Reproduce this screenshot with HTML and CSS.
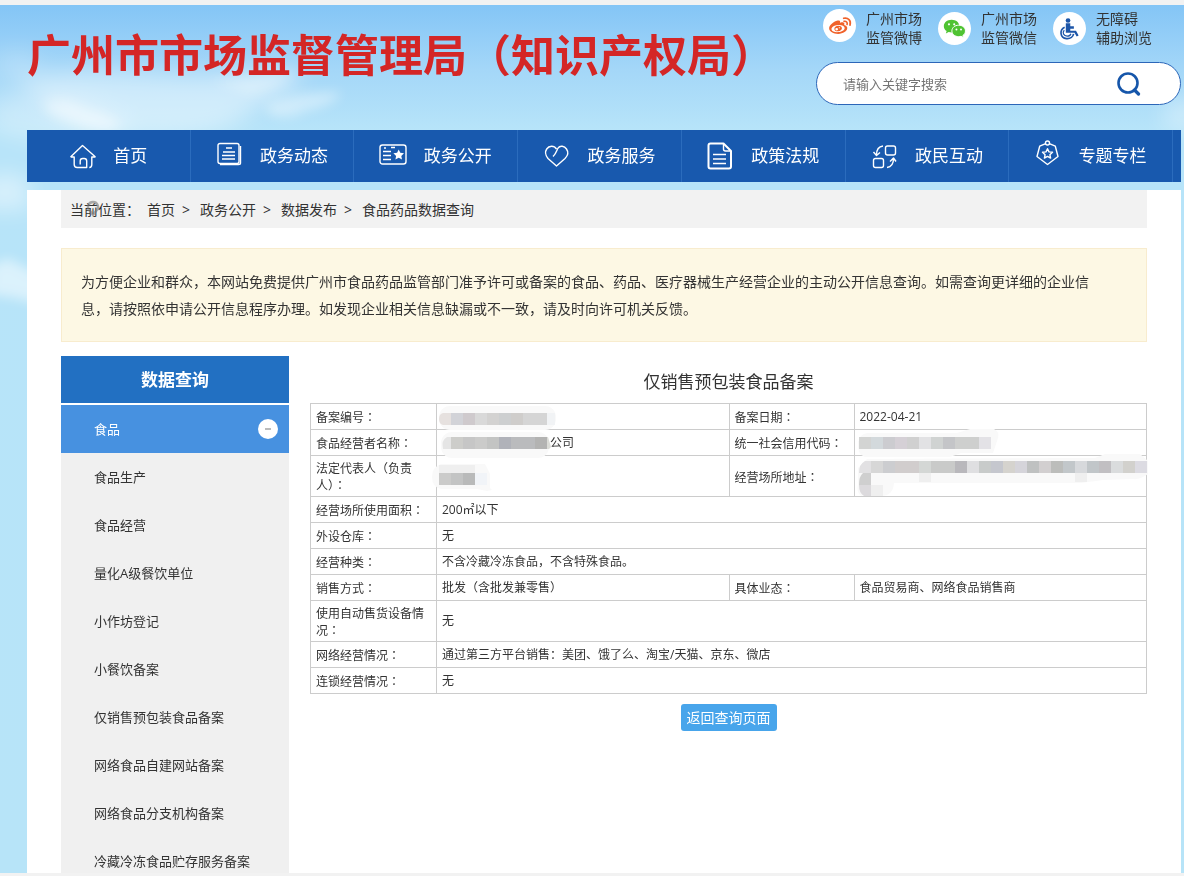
FILE: index.html
```html
<!DOCTYPE html>
<html lang="zh-CN">
<head>
<meta charset="utf-8">
<meta name="viewport" content="width=device-width, initial-scale=1">
<title>仅销售预包装食品备案</title>
<link rel="stylesheet" href="styles.css">
</head>
<body>
<div class="shell">
  <svg class="sky" viewBox="0 0 1184 400" width="1184" height="400" aria-hidden="true">
    <defs>
      <filter id="soft" x="-30%" y="-60%" width="160%" height="220%"><feGaussianBlur stdDeviation="11"/></filter>
      <filter id="fine" x="-30%" y="-60%" width="160%" height="220%"><feGaussianBlur stdDeviation="6"/></filter>
    </defs>
    <g fill="#fff" filter="url(#soft)">
      <path opacity=".42" d="M15 74 C70 60 120 68 180 70 S280 58 298 70 S260 95 240 115 S100 140 60 110Z"/>
      <path opacity=".3" d="M-10 95 C30 80 90 90 125 115 S60 150 -10 125Z"/>
      <path opacity=".45" d="M-20 175 Q15 160 30 178 V205 H-20Z"/>
      <path opacity=".2" d="M-5 50 Q25 40 45 55 L20 75 L-5 65Z"/>
      <path opacity=".35" d="M1165 100 Q1185 90 1200 95 V125 H1165Z"/>
    </g>
    <g fill="#fff" filter="url(#fine)">
      <path opacity=".4" d="M42 98 Q68 90 84 104 Q105 108 122 120 L108 126 Q80 122 66 116 Q48 112 42 98Z"/>
      <path opacity=".4" d="M266 100 Q305 84 342 88 Q334 100 305 106 Q290 116 270 110Z"/>
      <path opacity=".5" d="M-10 263 Q8 248 16 258 Q30 264 40 270 V300 Q10 290 -10 290Z"/>
      <path opacity=".25" d="M210 76 Q260 70 296 66 Q280 84 250 90Z"/>
    </g>
  </svg>

  <div class="page">
    <header class="header">
      <h1 class="site-title">广州市市场监督管理局（知识产权局）</h1>
      <div class="tools">
        <nav class="quick" aria-label="快捷入口">
          <a class="quick-link quick-link-raised" href="#">
            <svg class="quick-icon" viewBox="0 0 34 34" aria-hidden="true">
              <circle cx="17" cy="17" r="17" fill="#fff"/>
              <path fill="#f0622a" fill-rule="evenodd" d="M14.2 12.2c1.5-.7 3.200-.7 3.400.6.1.8-.2 1.500-.2 1.500s1.900-.8 3.400-.5c1.500.3 1.400 1.500 1 2.700 2 .5 3.200 1.700 3.200 3.200 0 3.200-4.300 6-9.400 6-4.900 0-9.300-2.300-9.300-5.800 0-2.800 4-6.400 7.900-7.700zM15.300 16.500c-4 .4-6.900 2.400-6.500 4.500.3 2 3.500 3.200 7.300 2.800 3.900-.4 6.500-2.400 6.200-4.500-.3-2-3.200-3.200-7-2.800z"/>
              <path fill="#f0622a" fill-rule="evenodd" d="M15.800 17.300c-2.400 0-4.300 1.500-4.100 3.300.1 1.700 1.900 2.700 4 2.400 2.300-.3 4-1.800 3.800-3.400-.2-1.500-1.800-2.300-3.700-2.300zm-1.700 2.400a1.400 1.200 0 1 1 0 2.400 1.400 1.200 0 0 1 0-2.400zm2.800-1a.8.6 0 1 1 0 1.200.8.6 0 0 1 0-1.200z"/>
              <path fill="none" stroke="#f0622a" stroke-width="1.700" stroke-linecap="round" d="M21.300 9.600c4.500-1.200 8 2.600 6.500 7M21.700 12.700c2.200-.5 3.800 1.200 3.100 3.200"/>
            </svg>
            <span>广州市场<br>监管微博</span>
          </a>
          <a class="quick-link" href="#">
            <svg class="quick-icon" viewBox="0 0 34 34" aria-hidden="true">
              <circle cx="17" cy="17" r="17" fill="#fff"/>
              <path fill="#4fc332" d="M14 8c-4.600 0-8 2.900-8 6.600 0 2.100 1.100 3.900 2.900 5.100l-.8 2.500 2.900-1.500c1 .3 2 .5 3 .5 4.600 0 8-2.900 8-6.600S18.600 8 14 8z"/>
              <path fill="#4fc332" stroke="#fff" d="M21.300 13.600c-4 0-7 2.600-7 5.900s3 5.900 7 5.900c.9 0 1.700-.1 2.500-.4l2.500 1.400-.7-2.200c1.700-1.100 2.700-2.800 2.700-4.700 0-3.300-3-5.900-7-5.900z"/>
              <g fill="#fff"><circle cx="11.300" cy="12.700" r="1.100"/><circle cx="16.700" cy="12.700" r="1.100"/><circle cx="19" cy="18" r="1"/><circle cx="23.700" cy="18" r="1"/></g>
            </svg>
            <span>广州市场<br>监管微信</span>
          </a>
          <a class="quick-link" href="#">
            <svg class="quick-icon" viewBox="0 0 34 34" aria-hidden="true">
              <circle cx="17" cy="17" r="17" fill="#fff"/>
              <circle cx="15.500" cy="8.800" r="2.400" fill="#1c55a8"/>
              <path fill="#1c55a8" d="M13.200 11.500h4.600v3.300h3.700v2.400h-3.700v2h5.900l2.700 4.900-2 1.100-2.300-3.700h-8.900z"/>
              <path fill="none" stroke="#1c55a8" stroke-width="1.700" d="M12 15.600c-5.600 2.700-4.900 11 1.900 11.800 4.200.4 6.800-2 7.300-4.800"/>
              <path fill="none" stroke="#1c55a8" stroke-width="1.300" d="M11.600 18.600c-2.300 2.600-.7 6.300 3 6.300 2.100 0 3.400-1 3.800-2.500"/>
            </svg>
            <span>无障碍<br>辅助浏览</span>
          </a>
        </nav>
        <form class="search" role="search">
          <input class="search-input" type="search" aria-label="搜索" placeholder="请输入关键字搜索">
          <button class="search-button" type="button" aria-label="提交搜索">
            <svg viewBox="0 0 24 24" width="24" height="24" aria-hidden="true"><circle cx="11" cy="11" r="9.500" fill="none" stroke="#1656aa" stroke-width="2.600"/><path d="M17.500 18l4 4" stroke="#1656aa" stroke-width="3.200" stroke-linecap="round"/></svg>
          </button>
        </form>
      </div>
    </header>

    <nav class="main-nav" aria-label="主导航">
      <a class="nav-item" href="#"><svg class="nav-icon" viewBox="0 0 28 28" aria-hidden="true"><path d="M1.500 15L13.500 3.500 26.500 15 M1.500 15h3.700v7.500q0 3 3 3h9.500V19q0-2.500-2.500-2.500h-1.500q-2.500 0-2.500 2.500v3.500 M26.500 15h-3.700v7.500q0 3-2.500 3"/></svg>首页</a>
      <a class="nav-item" href="#"><svg class="nav-icon" viewBox="0 0 28 28" aria-hidden="true"><rect x="2" y="1.500" width="21" height="20" rx="2"/><path d="M24.500 4v17q0 1.500-2 1.500H4 M10 6h6M7 10h12M6 13.500h13M6 17h13"/></svg>政务动态</a>
      <a class="nav-item" href="#"><svg class="nav-icon" viewBox="0 0 28 28" aria-hidden="true"><rect x="0" y="3" width="26" height="19" rx="2.500"/><path d="M3 9.500h8M4 6h2M11 5.500h4M3 13.500h8M3 17.500h8"/><path class="nav-fill" d="M18.700 7.500l1.600 3.300 3.700.5-2.700 2.600.7 3.700-3.300-1.800-3.300 1.800.7-3.700-2.700-2.600 3.700-.5z"/></svg>政务公开</a>
      <a class="nav-item" href="#"><svg class="nav-icon" viewBox="0 0 28 28" aria-hidden="true"><path d="M13.500 7C11 3.200 6 3.500 3.700 7S3 14 5 16.500L13.500 24l8.500-7.500c3-3 3.500-6.500 1.500-9.500s-6.500-4-8.500-.8C13.700 8 13.500 11 10 14.500"/></svg>政务服务</a>
      <a class="nav-item" href="#"><svg class="nav-icon" viewBox="0 0 28 28" aria-hidden="true"><path stroke-width="2" d="M16.500 1.500H3.500q-2 0-2 2v21q0 2 2 2h18.500q2 0 2-2V9z"/><path d="M16.500 2v5q0 2 2 2h5 M6 12.500h13M6 17h13M6 21.500h13"/></svg>政策法规</a>
      <a class="nav-item" href="#"><svg class="nav-icon" viewBox="0 0 28 28" aria-hidden="true"><rect x="14.500" y="4" width="10" height="9" rx="2"/><rect x="2.500" y="16.500" width="10" height="9" rx="2"/><path d="M12 4C7.500 4.500 5.500 7.500 5.500 13M2.500 10l3 3.500 3.500-3 M16 25.500C20 25 22.500 21.500 22.500 16.500M19 19.500l3.500-3.500 2.500 3.500"/></svg>政民互动</a>
      <a class="nav-item" href="#"><svg class="nav-icon" viewBox="0 0 28 28" aria-hidden="true"><path d="M12.500.8L4.700 4.200 2 14.500 12.500 22.500 23 14.500 20.300 4.200z"/><circle cx="12.500" cy="1" r="2" fill="#1859ae"/><path d="M12.500 6.700l1.500 3.200 3.500.4-2.600 2.400.7 3.400-3.100-1.700-3.100 1.700.7-3.400-2.600-2.400 3.500-.4z"/></svg>专题专栏</a>
    </nav>

    <main class="content">
      <nav class="crumbs" aria-label="当前位置">
        <svg class="pin" viewBox="0 0 14 18" width="14" height="18" aria-hidden="true"><path fill="none" stroke="#777" stroke-opacity=".6" stroke-width="2.500" d="M7 2a5 5 0 0 1 3 9L7 15 4 11A5 5 0 0 1 7 2z"/></svg>
        <span class="crumbs-label">当前位置：</span>
        <a href="#">首页</a><span class="sep">&gt;</span>
        <a href="#">政务公开</a><span class="sep">&gt;</span>
        <a href="#">数据发布</a><span class="sep">&gt;</span>
        <a href="#">食品药品数据查询</a>
      </nav>

      <p class="notice">为方便企业和群众，本网站免费提供广州市食品药品监管部门准予许可或备案的食品、药品、医疗器械生产经营企业的主动公开信息查询。如需查询更详细的企业信<br>息，请按照依申请公开信息程序办理。如发现企业相关信息缺漏或不一致，请及时向许可机关反馈。</p>

      <div class="columns">
        <aside class="sidebar">
          <h2 class="sidebar-title">数据查询</h2>
          <button class="group" type="button" aria-expanded="true">食品<span class="minus" aria-hidden="true"></span></button>
          <ul class="menu">
            <li><a href="#">食品生产</a></li>
            <li><a href="#">食品经营</a></li>
            <li><a href="#">量化A级餐饮单位</a></li>
            <li><a href="#">小作坊登记</a></li>
            <li><a href="#">小餐饮备案</a></li>
            <li><a href="#">仅销售预包装食品备案</a></li>
            <li><a href="#">网络食品自建网站备案</a></li>
            <li><a href="#">网络食品分支机构备案</a></li>
            <li><a href="#">冷藏冷冻食品贮存服务备案</a></li>
          </ul>
        </aside>

        <section class="record">
          <h2 class="record-title">仅销售预包装食品备案</h2>
          <table class="details">
            <colgroup><col class="col-label"><col><col class="col-label-narrow"><col></colgroup>
            <tbody>
              <tr>
                <th scope="row">备案编号<span class="colon" lang="zh-TW">：</span></th>
                <td><svg class="mask" width="120" height="27" aria-hidden="true"><rect x="2" y="2" width="117" height="24" rx="11" fill="#f9f9f9"/><g><path fill="#e6e1df" d="M6 9h8v12H6q-4-1-4-6t4-6z"/><path fill="#d2d3d8" d="M14 9h12v12H14z"/><path fill="#cfcacd" d="M26 9h12v12H26z"/><path fill="#d9d9d9" d="M38 9h12v12H38z"/><path fill="#d3d2d1" d="M50 9h12v12H50z"/><path fill="#cdcfd0" d="M62 9h12v12H62z"/><path fill="#cfcdcb" d="M74 9h12v12H74z"/><path fill="#d5d5d5" d="M86 9h24v12H86z"/><path fill="#f1f3f5" d="M110 9h8v12h-8z"/></g></svg></td>
                <th scope="row">备案日期<span class="colon" lang="zh-TW">：</span></th>
                <td>2022-04-21</td>
              </tr>
              <tr>
                <th scope="row">食品经营者名称<span class="colon" lang="zh-TW">：</span></th>
                <td><span class="after-mask">公司</span><svg class="mask" width="120" height="30" aria-hidden="true"><rect x="4" y="2" width="108" height="26" rx="11" fill="#f9f9f9"/><path fill="#e5e5e5" d="M10 7h4v12H6q-2-9 4-12z"/><path fill="#cdcdca" d="M14 7h12v12H14z"/><path fill="#c6c6c6" d="M26 7h12v12H26z"/><path fill="#cbcbca" d="M38 7h12v12H38z"/><path fill="#c3c4c3" d="M50 7h12v12H50z"/><path fill="#b0b2b9" d="M62 7h12v12H62z"/><path fill="#babbbd" d="M74 7h24v12H74z"/><path fill="#b3b3b2" d="M98 7h12v12H98z"/><path fill="#dbdcd7" d="M110 7h1l3 10-2 2h-2z"/></svg></td>
                <th scope="row">统一社会信用代码<span class="colon" lang="zh-TW">：</span></th>
                <td><svg class="mask" width="146" height="30" aria-hidden="true"><path fill="#f9f9f9" d="M12 3h90L115-1h24q6 3 4 9l-5 15H106L95 27H10Q2 25 3 12q2-8 9-9z"/><path fill="#d3d4d3" d="M4 7h12v12H4z"/><path fill="#d3d9dc" d="M16 7h12v12H16z"/><path fill="#ccccd0" d="M28 7h12v12H28z"/><path fill="#d5d0d6" d="M40 7h12v12H40z"/><path fill="#d0d0d0" d="M52 7h12v12H52z"/><path fill="#e2e2e4" d="M64 7h12v12H64z"/><path fill="#d0d3d2" d="M76 7h12v12H76z"/><path fill="#c4c5c8" d="M88 7h12v12H88z"/><path fill="#cecfce" d="M100 7h24v12h-24z"/><path fill="#e3e2e6" d="M124 7h12v12h-12z"/></svg></td>
              </tr>
              <tr>
                <th scope="row">法定代表人（负责人）<span class="colon" lang="zh-TW">：</span></th>
                <td><svg class="mask" width="60" height="40" aria-hidden="true"><path fill="#f9f9f9" d="M4 8h44l5 10v14l2 2-5 1-10-2H4q-9-2-9-12T4 8z"/><path fill="#efefef" d="M2 9h36v8H2z"/><path fill="#cbcbca" d="M2 17h12v12H2z"/><path fill="#c3c4c4" d="M14 17h12v12H14z"/><path fill="#b9baba" d="M26 17h12v12H26z"/><path fill="#f1f4f8" d="M38 17h12v12H38z"/></svg></td>
                <th scope="row">经营场所地址<span class="colon" lang="zh-TW">：</span></th>
                <td><svg class="mask" width="294" height="42" aria-hidden="true"><path fill="#f9f9f9" d="M12 3L240 2 250-2H285L293 5V18q-8 6-15 5l-30 1-22 3H39Q38 40 26 40H7Q1 38 3 28V12z"/><path fill="#e2e1e3" d="M16 5H10q-6 3-6 12h12z"/><path fill="#d7d7d7" d="M16 5h12v12H16z"/><path fill="#cccdd0" d="M28 5h12v12H28z"/><path fill="#d1cdcd" d="M40 5h24v12H40z"/><path fill="#d4d7d5" d="M64 5h12v12H64z"/><path fill="#c9cac9" d="M76 5h24v12H76z"/><path fill="#b9b8bc" d="M100 5h12v12h-12z"/><path fill="#dfdfe1" d="M112 5h12v12h-12z"/><path fill="#c8cbca" d="M124 5h12v12h-12z"/><path fill="#c5c7ce" d="M136 5h12v12h-12z"/><path fill="#d5d3ce" d="M148 5h12v12h-12z"/><path fill="#d5d4da" d="M160 5h12v12h-12z"/><path fill="#bfc1c1" d="M172 5h12v12h-12z"/><path fill="#d2cfd0" d="M184 5h12v12h-12z"/><path fill="#bcbdbb" d="M196 5h12v12h-12z"/><path fill="#c2c7ca" d="M208 5h12v12h-12z"/><path fill="#d7d9dc" d="M220 5h12v12h-12z"/><path fill="#c1c6c9" d="M232 5h12v12h-12z"/><path fill="#c1bfc2" d="M244 5h12v12h-12z"/><path fill="#dadcdd" d="M256 5h12v12h-12z"/><path fill="#d2d1cd" d="M268 5h12v12h-12z"/><path fill="#dcdbe2" d="M280 5h12v12h-12z"/><path fill="#efefef" d="M64 17h12v9H64zM220 17h12v9h-12zM16 29h12v11H16z"/><path fill="#cfcfcf" d="M8 17h8v12H4q0-9 4-12z"/><path fill="#dcdadd" d="M4 29h12v11H9q-5-3-5-11z"/></svg></td>
              </tr>
              <tr><th scope="row">经营场所使用面积<span class="colon" lang="zh-TW">：</span></th><td colspan="3">200㎡以下</td></tr>
              <tr><th scope="row">外设仓库<span class="colon" lang="zh-TW">：</span></th><td colspan="3">无</td></tr>
              <tr><th scope="row">经营种类<span class="colon" lang="zh-TW">：</span></th><td colspan="3">不含冷藏冷冻食品，不含特殊食品。</td></tr>
              <tr>
                <th scope="row">销售方式<span class="colon" lang="zh-TW">：</span></th><td>批发（含批发兼零售）</td>
                <th scope="row">具体业态<span class="colon" lang="zh-TW">：</span></th><td>食品贸易商、网络食品销售商</td>
              </tr>
              <tr><th scope="row">使用自动售货设备情况<span class="colon" lang="zh-TW">：</span></th><td colspan="3">无</td></tr>
              <tr><th scope="row">网络经营情况<span class="colon" lang="zh-TW">：</span></th><td colspan="3">通过第三方平台销售：美团、饿了么、淘宝/天猫、京东、微店</td></tr>
              <tr><th scope="row">连锁经营情况<span class="colon" lang="zh-TW">：</span></th><td colspan="3">无</td></tr>
            </tbody>
          </table>
          <button class="back" type="button">返回查询页面</button>
        </section>
      </div>
    </main>
  </div>
</div>
</body>
</html>
```

FILE: styles.css
```css
* { box-sizing: border-box; }

body {
  margin: 0;
  color: #333;
  font-family: "Open Sans", "Noto Sans CJK SC", sans-serif;
  font-size: 14px;
}

a { color: inherit; text-decoration: none; }

h1, h2, p, ul { margin: 0; padding: 0; }

button { border: 0; padding: 0; font: inherit; cursor: pointer; }

/* Scrolling frame with grey rules above and below */
.shell {
  position: relative;
  height: 100vh;
  overflow: hidden auto;
  scrollbar-width: none;
  border-top: 5px solid #f2f2f2;
  border-bottom: 3px solid #f2f2f2;
  background: linear-gradient(#84c5f6 0, #a4d7f8 65px, #b7e4f9 125px, #b7e4f8 100%);
}

.sky { position: absolute; top: 0; left: 0; }

.page {
  position: relative;
  display: flex;
  flex-direction: column;
  min-height: 100%;
  padding: 0 3px 0 27px;
}

/* Header */
.header {
  display: flex;
  justify-content: space-between;
  min-height: 125px;
}

.site-title {
  padding-top: 16px;
  color: #d42626;
  font-family: "Noto Sans CJK SC", sans-serif;
  font-size: 44px;
  line-height: 64px;
  font-weight: 700;
  white-space: nowrap;
}

.tools { width: 365px; flex: none; }

.quick {
  display: grid;
  grid-template-columns: repeat(3, 115px);
  padding: 4px 0 0 7px;
}

.quick-link {
  display: flex;
  align-items: center;
  gap: 10px;
  line-height: 19px;
  white-space: nowrap;
}

.quick-icon { width: 33px; height: 33px; flex: none; }
.quick-link-raised .quick-icon { align-self: flex-start; }

.search {
  display: flex;
  align-items: center;
  height: 43px;
  margin-top: 15px;
  padding: 0 39px 0 26px;
  border: 1px solid #2c66b8;
  border-radius: 22px;
  background: #fff;
}

.search-input {
  flex: 1;
  min-width: 0;
  padding: 0;
  border: 0;
  outline: 0;
  background: none;
  font: inherit;
  font-size: 13px;
}

.search-input::placeholder { color: #757575; }

.search-button { display: flex; background: none; }

/* Main navigation */
.main-nav {
  display: grid;
  grid-template-columns: repeat(7, 1fr);
  height: 52px;
  padding-right: 8px;
  background: #1859ae;
}

.nav-item {
  display: flex;
  align-items: center;
  justify-content: center;
  gap: 16px;
  border-right: 1px solid #2b6cbd;
  color: #fff;
  font-size: 17px;
  line-height: 50px;
  white-space: nowrap;
}

.nav-icon {
  width: 28px;
  height: 28px;
  overflow: visible;
  fill: none;
  stroke: #fff;
  stroke-width: 1.4;
  stroke-linejoin: round;
}

.nav-fill { fill: #fff; stroke: none; }

/* Content */
.content {
  flex: 1;
  margin-top: 8px;
  padding: 0 34px;
  background: #fff;
}

.crumbs {
  position: relative;
  display: flex;
  align-items: center;
  height: 38px;
  padding-left: 9px;
  background: #f2f2f2;
}

.crumbs-label { margin-right: 7px; }
.sep { margin: 0 10px 0 7px; }
.pin { position: absolute; left: 25px; top: 10px; }

.notice {
  margin-top: 20px;
  padding: 19px;
  border: 1px solid #f8ecce;
  background: #fdf8e4;
  line-height: 27px;
}

.columns {
  display: flex;
  align-items: flex-start;
  gap: 21px;
  margin-top: 14px;
}

/* Sidebar */
.sidebar {
  flex: none;
  width: 228px;
  background: #f0f0f0;
  font-size: 13px;
}

.sidebar-title {
  border-bottom: 2px solid #fff;
  background: #2270c2;
  color: #fff;
  font-size: 17px;
  line-height: 47px;
  text-align: center;
}

.group {
  display: flex;
  align-items: center;
  justify-content: space-between;
  width: 100%;
  height: 48px;
  padding: 0 11px 0 33px;
  background: #4791e0;
  color: #fff;
  line-height: 48px;
}

.minus {
  display: flex;
  align-items: center;
  justify-content: center;
  width: 20px;
  height: 20px;
  border-radius: 50%;
  background: #fff;
}

.minus::before {
  content: "";
  width: 6px;
  height: 2px;
  background: #bbb;
}

.menu { list-style: none; }

.menu a {
  display: block;
  padding-left: 33px;
  line-height: 48px;
}

/* Record */
.record { flex: 1; min-width: 0; text-align: center; }

.record-title {
  padding-top: 5px;
  font-size: 17px;
  font-weight: 400;
  line-height: 42px;
}

.details {
  width: 100%;
  table-layout: fixed;
  border-collapse: collapse;
  font-size: 12px;
  line-height: 16px;
  text-align: left;
}

.col-label { width: 126px; }
.col-label-narrow { width: 125px; }

.details th,
.details td {
  position: relative;
  height: 26px;
  padding: 4px 5px;
  border: 1px solid #ccc;
  font-weight: 400;
}

.details th {
  padding: 3px 5px;
  font-family: "Noto Sans CJK SC", sans-serif;
  line-height: 17px;
}

/* The Traditional Chinese face centres its colon in the full-width cell */
.colon { font-family: "Noto Sans CJK TC", sans-serif; }

.mask {
  position: absolute;
  top: 0;
  left: 0;
  z-index: 1;
  overflow: visible;
}

.after-mask { padding-left: 108px; }

.back {
  height: 27px;
  margin-top: 10px;
  padding: 0 6px;
  border-radius: 3px;
  background: #48a5eb;
  color: #fff;
  line-height: 27px;
}
```
